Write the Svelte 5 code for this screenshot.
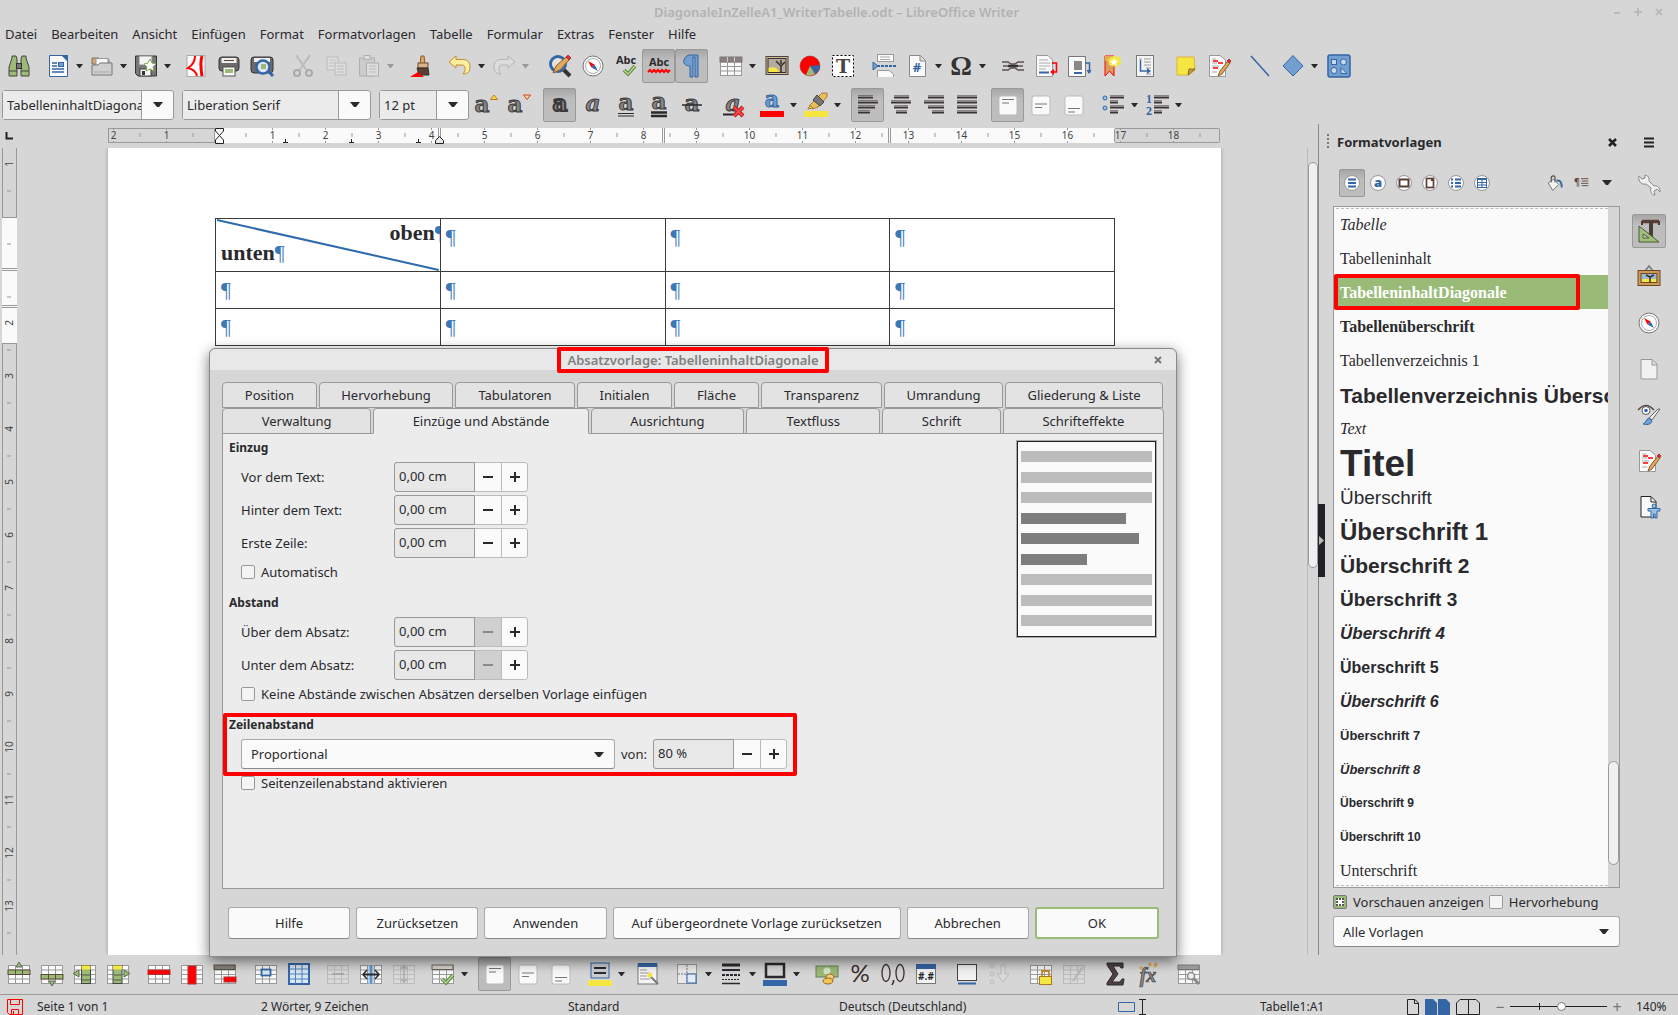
<script>
	const INK = '#2a2a2e';
	const BLUE = '#3465a4';
	const SKY = '#729fcf';
	const GREEN = '#9aba76';
	const YELLOW = '#f5e642';

	const rect = (x, y, w, h, fill, stroke = 'none', extra = '') =>
		`<rect x="${x}" y="${y}" width="${w}" height="${h}" fill="${fill}" stroke="${stroke}" ${extra}/>`;
	const line = (d, color = INK, width = 1, extra = '') =>
		`<path d="${d}" fill="none" stroke="${color}" stroke-width="${width}" ${extra}/>`;
	const shape = (d, fill, stroke = 'none') => `<path d="${d}" fill="${fill}" stroke="${stroke}"/>`;

	const grid = (color = '#999', fill = '#fafafa') =>
		rect(1.5, 3.5, 21, 18, fill, color) +
		line('M1 8H23M1 12.5H23M1 17H23M8.5 3V22M15.5 3V22', color, 1);
	const letter = (char, style = '', y = 18) =>
		`<text x="12" y="${y}" text-anchor="middle" font-family="DejaVu Serif" font-weight="700" font-size="23" fill="#858585" stroke="#3a3a3c" stroke-width="1" ${style}>${char}</text>`;
	const sheet = shape('M4.5 1.5H15.5L20.5 6.5V22.5H4.5Z', '#fafafa', '#8a8a8a') + shape('M15 2V7H20', '#ddd', '#8a8a8a');
	const rows = (list) =>
		list.map(([x1, x2], i) => line(`M${x1} ${4 + i * 5}H${x2}`, '#3a3436', 3) + line(`M${x1} ${3.5 + i * 5}H${x2}`, '#8f8a8d', 1)).join('');
	const cellAlign = (y) =>
		rect(3, 3, 18, 19, '#fafafa', '#bbb', 'rx="2"') + line(`M6 ${y}H18M6 ${y + 3.5}H13`, '#777', 1.2);
	const pencil = shape('M11 22L13 17L21 7L23 9L15 20Z', '#e0a95c', '#8a5a2b') + shape('M20 7L22 5L24 7L22.5 9Z', '#ef2929', '#a33');

	const icons = {
		binoculars:
			shape('M2 22V13L5 4V2H9L10 5V22Z', GREEN, '#47453f') +
			shape('M22 22V13L19 4V2H15L14 5V22Z', GREEN, '#47453f') +
			rect(9.5, 9.5, 5, 5, '#777', '#333') + line('M2 17H10M14 17H22', '#47453f'),
		new: shape('M3.5 1.5H15L21.5 1.5V22.5H3.5Z', '#fafafa', BLUE) + shape('M15 1H22V8Z', BLUE) + line('M6 9H11M6 12H11M6 15H18M6 18H18', BLUE, 1.5) + rect(12.5, 8.5, 5, 4, SKY, BLUE),
		open: shape('M2 4H9L11 6H19V10H2Z', '#d8a874', '#77706b') + rect(6, 4.5, 12, 7, '#f6f6f6', '#999') + shape('M2 11H8L10 9H22V21H2Z', '#cfcfcf', '#777') + line('M4 18H20', '#aaa'),
		save: shape('M1.5 2H22.5V22H4L1.5 19.5Z', '#777', '#333') + rect(5, 2, 13, 9, '#f4f4f4', '#888') + rect(6, 15, 11, 7, '#f4f4f4', '#444') + rect(8, 17, 3, 4, '#333') + shape('M16 5L18 9L22 10L19 13L20 17L16 15L12 17L13 13L10 10L14 9Z', '#fff', '#7ea552'),
		pdf: rect(3, 1.5, 18, 21, '#fafafa', '#aaa') + line('M11 2C11 8 9 11 4 14C9 15 12 18 13 22', '#f00', 2) + line('M18 2C16 8 17 16 18 22', '#f00', 3),
		print: rect(2, 3, 20, 14, '#6d6869', '#333', 'rx="3"') + rect(4.5, 4, 15, 5, '#eee') + line('M7 6.5H17', '#5b3f34') + rect(6, 13, 12, 9, '#f8f8f8', '#555') + rect(8, 15, 8, 4, GREEN),
		preview: rect(1, 3, 22, 16, '#6d6869', '#333', 'rx="3"') + rect(4, 4, 16, 4, '#eee') + line('M18 17L23 22', BLUE, 3) + '<circle cx="13" cy="13" r="6.5" fill="#dbe7f3" stroke="#3465a4" stroke-width="2.4"/>' + rect(11, 10, 5, 5, GREEN),
		cut: line('M5 1L16 17M19 1L8 17', '#bbb', 2) + '<circle cx="6" cy="19" r="3" fill="none" stroke="#aaa" stroke-width="2"/><circle cx="18" cy="19" r="3" fill="none" stroke="#aaa" stroke-width="2"/>',
		copy: rect(3, 3, 11, 13, '#ddd', '#bbb') + line('M5 6H12M5 9H12M5 12H12', '#c2c2c2') + rect(11, 9, 11, 12, '#ddd', '#bbb') + line('M13 12H20M13 15H20M13 18H20', '#bbb'),
		paste: rect(2.5, 4, 15, 18, '#ccc', '#b0b0b0') + rect(7, 1.5, 6, 4, '#ddd', '#b0b0b0') + rect(9.5, 9, 12, 13, '#ddd', '#b0b0b0') + line('M12 12H19M12 15H19M12 18H19', '#bbb'),
		brush: shape('M12 2H15L16 10H11Z', '#e0a95c', '#8a5a2b') + rect(9, 9, 10, 5, '#d9b38c', '#6d4c30') + shape('M8 14H19L20 21H10Z', '#5b3f34', '#333') + shape('M1 23L9 18L15 23Z', '#f00'),
		undo: shape('M1 8L8 2V5.5H15C20 5.5 22 9 22 13C22 18 19 20 15 20C18 17 18 11 14 11H8V14Z', '#fbf0a0', '#c58a2e'),
		redo: shape('M23 8L16 2V5.5H9C4 5.5 2 9 2 13C2 18 5 20 9 20C6 17 6 11 10 11H16V14Z', '#dcdcdc', '#b5b5b5'),
		find: '<circle cx="10" cy="10" r="7.5" fill="#e9e2dc" stroke="#3465a4" stroke-width="3"/>' + line('M16 16L22 22', '#333', 4) + shape('M5 19L8 12L18 3L21 6L12 16Z', '#e0a95c', '#8a5a2b') + shape('M18 3L20 1L23 4L21 6Z', '#ef2929', '#a33'),
		compass: '<circle cx="12" cy="12" r="10" fill="#fafafa" stroke="#777"/><circle cx="12" cy="12" r="7.5" fill="#fff" stroke="#aaa"/>' + shape('M7 7L13.5 10.5L10.5 13.5Z', '#f00') + shape('M17 17L13.5 10.5L10.5 13.5Z', BLUE),
		spell: `<text x="12" y="10" text-anchor="middle" font-family="Open Sans" font-weight="700" font-size="11" fill="${INK}">Abc</text>` + line('M10 16L14 20L21 12', '#5d8a3a', 3.5) + line('M10 16L14 20L21 12', '#b5d694', 1.5),
		autospell: `<text x="12" y="12" text-anchor="middle" font-family="Open Sans" font-weight="700" font-size="11" fill="${INK}">Abc</text>` + line('M1 18L3 16L5 18L7 16L9 18L11 16L13 18L15 16L17 18L19 16L21 18L23 16', '#f00', 2),
		marks: shape('M18 1V23H15V3H13V23H10V12C5 12 3 9 4 6C5 3 7 1 10 1Z', SKY, BLUE),
		table: grid() + rect(1, 3, 22, 5, '#8b7f7f', '#777') + line('M8.5 3V8M15.5 3V8', '#ccc'),
		image: rect(1, 2.5, 22, 18, '#e0b98c', '#444') + rect(3, 4.5, 18, 14, '#b5aaa0', '#333') + shape('M3.5 14C8 12 13 14 14 18H3.5Z', YELLOW) + line('M16 18V11M16 12L11 7M16 12L20 8M16 10V6', '#3b2c28', 1.5),
		chart: '<circle cx="12" cy="12" r="10" fill="#f00" stroke="#822" stroke-width=".5"/>' + shape('M12 12L22 11A10 10 0 0 1 17 20Z', BLUE) + shape('M12 12L17 20A10 10 0 0 1 8 21Z', GREEN),
		textbox: rect(1.5, 1.5, 21, 21, '#fff', '#000', 'stroke-dasharray="2 2"') + `<text x="12" y="19" text-anchor="middle" font-family="DejaVu Serif" font-weight="700" font-size="19" fill="#4a4445">T</text>`,
		pagebreak: rect(5.5, .5, 16, 7, '#fafafa', '#999') + line('M8 3H18M8 5.5H18', '#aaa') + line('M5 12H24', BLUE, 2, 'stroke-dasharray="3 1"') + shape('M1 8L6 12L1 16Z', SKY, BLUE) + shape('M5.5 23V16.5H17L21.5 20V23', '#fafafa', '#999'),
		field: sheet + `<text x="12" y="18" text-anchor="middle" font-family="Open Sans" font-weight="700" font-size="13" fill="${BLUE}">#</text>`,
		omega: `<text x="12" y="21" text-anchor="middle" font-family="Liberation Serif" font-weight="700" font-size="27" fill="#333">Ω</text>`,
		link: line('M1 8H7L10 10H14L17 8H23M1 16H7L10 14H14L17 16H23M2 12H8M16 12H22', '#5b5150', 1.5) + line('M7 12H17', '#333', 2.5),
		footnote: shape('M2.5 1.5H14L18.5 6V22.5H2.5Z', '#fafafa', '#999') + line('M5 6H14M5 9H16M5 12H16M5 15H12', '#aaa') + line('M5 18.5H15', BLUE, 2) + line('M18 9H22.5V18H18', '#f00', 1.5) + shape('M16 18L20 15V21Z', '#f00'),
		endnote: shape('M1.5 2.5H18.5V22.5H1.5Z', '#fafafa', '#777') + rect(7, 7, 8, 9, '#888') + line('M7 19H15', BLUE, 2) + line('M18 9H22.5V19', BLUE, 1.5) + shape('M19.5 16H24.5L22 20Z', BLUE),
		bookmark: shape('M5 2H14V22L9.5 17L5 22Z', '#d8a05c', '#f00') + rect(5, 2, 9, 5, '#e0b050') + shape('M14 2L20 3L21 9L16 13L9 11L8 5Z', YELLOW) + shape('M14 4L15.5 6.5L18 7L16 9L16.5 11.5L14 10L11.5 11.5L12 9L10 7L13 6.5Z', '#fff'),
		crossref: rect(3.5, 1.5, 17, 21, '#f4f4f4', '#777') + line('M6 5H9M11 5H18M11 8H18M11 11H18M13 14H18M13 20H18', '#999') + line('M7.5 6V17H15', BLUE, 1.5) + shape('M14 14V20L18 17Z', BLUE),
		note: shape('M3 3L20 3L21 16L15 21H3Z', YELLOW, '#dcb43c') + shape('M14 21L15 15L21 15Z', '#c89b4d', '#8a6a2b'),
		track: shape('M2.5 1.5H13L18.5 6V22.5H2.5Z', '#fafafa', '#999') + line('M5 5H9M5 9H10M5 12H12M5 18H10', '#aaa') + line('M6 7H11M11 9H16M6 14H11', '#f00', 1.5) + pencil,
		line: line('M3 2L21 22', BLUE, 1.5),
		diamond: shape('M12 1.5L22 12L12 22L2 12Z', SKY, BLUE),
		shapes: rect(1, 1, 22, 22, SKY, BLUE, 'rx="2" stroke-width="1.5"') + rect(4.5, 5.5, 5, 5, '#c5daee', BLUE) + '<circle cx="16.5" cy="8" r="3" fill="#c5daee" stroke="#3465a4"/><circle cx="7" cy="16.5" r="3" fill="#c5daee" stroke="#3465a4"/>' + shape('M14 13.5V19.5H20Z', '#c5daee', BLUE),
		grow: '<g transform="translate(-4 1)">' + letter('a') + '</g>' + shape('M16.5 6.5L20 2L23.5 6.5Z', YELLOW, '#c07820'),
		shrink: '<g transform="translate(-4 1)">' + letter('a') + '</g>' + shape('M16.5 2H23.5L20 6.5Z', '#f6d9a0', '#d04020'),
		bold: letter('a').replace('stroke-width="1"', 'stroke-width="2"').replace('#858585', '#8f8380'),
		italic: letter('a', 'font-style="italic"'),
		underline: letter('a', '', 17) + line('M4 20.5H20M4 23H20', INK, 1),
		underline2: letter('a', '', 16) + line('M4 19.5H20M4 23H20', INK, 2.5),
		strike: letter('a') + line('M2 12H22', INK, 1.5),
		clear: letter('a', 'font-style="italic"') + line('M2 21.5H13', INK, 2) + line('M13 14L22 23M22 14L13 23', '#a22', 4) + line('M13 14L22 23M22 14L13 23', '#f44', 2),
		fontcolor: `<text x="12" y="14" text-anchor="middle" font-family="DejaVu Serif" font-weight="700" font-size="22" fill="${SKY}" stroke="${BLUE}">a</text>` + rect(0, 18, 24, 6, '#f00'),
		highlight: shape('M8 10L18 0H23V4L14 14L8 16L5 13Z', '#e8bf5a', '#a87b3a') + shape('M13 2L20 9L16 13L9 7Z', '#777', '#444') + shape('M4 15L7 13L9 15L4 16Z', YELLOW, '#a87b3a') + rect(0, 18, 24, 6, YELLOW),
		left: rows([[2, 17], [2, 22], [2, 19], [2, 14]]),
		center: rows([[5, 20], [2, 22], [5, 19], [7, 18]]),
		right: rows([[6, 22], [2, 22], [6, 22], [10, 22]]),
		justify: rows([[2, 22], [2, 22], [2, 22], [2, 22]]),
		top: cellAlign(6.5),
		middle: cellAlign(11),
		bottom: cellAlign(15.5),
		bullets: rows([[9, 23], [9, 17], [9, 23], [9, 17]]) + '<circle cx="4" cy="5" r="2" fill="#9cc3e8" stroke="#3465a4"/><circle cx="4" cy="15" r="2" fill="#9cc3e8" stroke="#3465a4"/>',
		numbers: rows([[9, 24], [9, 17], [9, 24], [9, 17]]) + `<text x="1" y="10" font-family="Liberation Serif" font-weight="700" font-size="12" fill="${BLUE}">1</text><text x="1" y="22" font-family="Liberation Serif" font-weight="700" font-size="12" fill="${BLUE}">2</text>`,
		rowAbove: grid() + rect(1, 8, 22, 4.5, GREEN, '#5d4a3e') + shape('M9 5L12 0L15 5Z', GREEN, '#5d6a4e') + line('M8.5 8V12M15.5 8V12', '#5d4a3e'),
		rowBelow: grid() + rect(1, 12.5, 22, 4.5, GREEN, '#5d4a3e') + shape('M9 19L12 24L15 19Z', GREEN, '#5d6a4e') + line('M8.5 13V17M15.5 13V17', '#5d4a3e'),
		colLeft: grid() + rect(8.5, 3.5, 9, 18, GREEN, '#444') + rect(8.5, 3.5, 9, 4, YELLOW) + line('M9 13H17M9 18H17', '#555') + shape('M6 8V15L0 11.5Z', GREEN, '#5d6a4e'),
		colRight: grid() + rect(7, 3.5, 9, 18, GREEN, '#444') + rect(7, 3.5, 9, 4, YELLOW) + line('M8 13H15M8 18H15', '#555') + shape('M18 8V15L24 11.5Z', GREEN, '#5d6a4e'),
		delRow: grid() + rect(1, 8, 22, 4.5, '#f00', '#a33'),
		delCol: grid() + rect(8, 4, 8, 18, '#f00', '#a33'),
		delTable: grid() + rect(1, 3, 21, 4.5, '#8b7f7f', '#554') + rect(11, 15, 12, 5, '#f00', '#a33'),
		selCell: grid() + rect(7.5, 7.5, 9, 6, '#dbe7f3', BLUE, 'stroke-width="1.8"'),
		selTable: rect(2, 2, 20, 20, '#dbe7f3', BLUE, 'stroke-width="2"') + line('M2 7H22M2 12H22M2 17H22M8.5 2V22M15 2V22', '#4a80bd'),
		merge: grid('#bbb', '#d9d9d9') + line('M6 12H18', '#aaa', 2),
		split: grid() + rect(9.5, 3, 5, 19, '#9cc3e8') + line('M12 3V22', BLUE) + line('M4 12.5H20', INK, 2) + line('M8 8L4 12.5L8 17M16 8L20 12.5L16 17', INK, 1.5),
		splitTable: grid('#bbb', '#d9d9d9') + line('M12 4V20M9 7L12 4L15 7M9 17L12 20L15 17', '#aaa', 1.5),
		autoFit: grid() + rect(1, 3, 21, 4.5, '#d9d0cc', '#665') + line('M11 17L15 21L22 13', '#5d8a3a', 3.5) + line('M11 17L15 21L22 13', '#b5d694', 1.5),
		fill: rect(3, 1, 18, 15, '#c9cdd2', BLUE) + line('M6 6H18M6 11H18', INK, 1.8) + rect(0, 18, 24, 6, YELLOW),
		autoFormat: rect(2, 2, 19, 20, '#f4f4f4', '#777') + rect(2, 1, 19, 4, BLUE) + line('M4 8H11M4 11H13M4 14H11M4 17H14', '#999') + line('M14 14L22 22', '#777', 2) + '<circle cx="14" cy="13" r="2.5" fill="#f5e642"/>',
		borders: rect(2.5, 2.5, 19, 19, '#eaeaea', '#999') + line('M12 3V21M3 12H21', '#777', 1, 'stroke-dasharray="2 1"') + rect(12, 12, 9, 9, '#e3ecf5', BLUE),
		lineStyle: line('M3 3H21', INK, 3) + line('M3 8H21', INK, 2) + line('M3 13H21', INK, 2, 'stroke-dasharray="3 1"') + line('M3 17.5H21', INK, 1, 'stroke-dasharray="2 1"') + line('M3 21.5H21', INK, 1.5),
		lineColor: rect(3, 2, 18, 13, '#d6d6d6', INK, 'stroke-width="2.5"') + rect(0, 18, 24, 6, BLUE),
		currency: rect(1, 4, 22, 11, GREEN, '#6b7f58') + '<circle cx="12" cy="9" r="3.5" fill="#d8e3cc"/><ellipse cx="15" cy="15" rx="4" ry="3" fill="#f3d27a" stroke="#9a6a2b"/><ellipse cx="13" cy="19" rx="5" ry="3" fill="#f3c64e" stroke="#9a6a2b"/>',
		percent: `<text x="12" y="20" text-anchor="middle" font-family="Lato" font-size="24" fill="#3b2f2d">%</text>`,
		decimal: '<ellipse cx="5" cy="11" rx="4" ry="8.5" fill="none" stroke="#3b2f2d" stroke-width="1.3"/><ellipse cx="19" cy="11" rx="4" ry="8.5" fill="none" stroke="#3b2f2d" stroke-width="1.3"/>' + line('M12.5 18V20L11 23', '#3b2f2d', 1.6),
		numFormat: rect(2.5, 2.5, 19, 19, '#f4f4f4', '#777') + rect(2, 2, 20, 5, BLUE) + `<text x="12" y="18" text-anchor="middle" font-family="Open Sans" font-weight="700" font-size="10" fill="${INK}">#.#</text>`,
		caption: rect(2.5, 2.5, 19, 16, '#f2f2f2', '#444') + line('M3 21.5H21', BLUE, 2),
		sort: '<circle cx="4" cy="4" r="2" fill="none" stroke="#bbb"/><circle cx="4" cy="12" r="2" fill="none" stroke="#bbb"/><circle cx="4" cy="20" r="2" fill="none" stroke="#bbb"/>' + shape('M13 3H17V12H21L15 20L9 12H13Z', '#dadada', '#bbb'),
		protect: grid() + rect(10.5, 14.5, 12, 8, YELLOW, '#a87b22') + line('M13 14V9H20V14', '#c58a2e', 1.8),
		unprotect: grid('#bbb', '#d9d9d9') + line('M21 5L11 19', '#bbb', 3),
		sum: shape('M4 1H20V6H18L17 4H10L15 12L9 20H17L19 17H21L20 23H4V21L10 12L4 3Z', '#4f4142', '#2a2a2e'),
		fx: `<text x="12" y="20" text-anchor="middle" font-family="Liberation Serif" font-style="italic" font-weight="700" font-size="20" fill="#888" stroke="#444" stroke-width=".7">fx</text>` + shape('M12 2L14 0L16 3L14 5ZM17 3L20 0L22 3L19 6ZM3 6L5 4L7 6L5 8Z', '#e0a95c'),
		tableProps: grid() + rect(1, 3, 21, 4.5, '#999', '#777') + line('M15 15L22 22', '#888', 3) + '<circle cx="14" cy="14" r="3.5" fill="#eee" stroke="#888" stroke-width="1.5"/>',
		wrench: shape('M2 3L5 6L8 5L8 2C13 3 12 7 12 8L17 13C21 12 23 15 23 19L20 16L17 18L18 22C14 22 13 18 14 15L9 11C4 12 1 8 2 3Z', '#efefef', '#888'),
		styles: line('M5 2.5H22', '#5b3f34', 3.5) + line('M14 2V21', '#4a3c38', 4) + line('M5 2V6M22 2V6', '#4a3c38', 2) + shape('M2 7V23H22Z', '#9fc07a', '#4a5a38') + shape('M6 15V19H12Z', '#d6d6d6', '#4a5a38'),
		gallery: line('M8 6L12 1L16 6', '#777', 1.5) + rect(1, 5.5, 22, 15, '#d09a55', '#6b4a2c') + rect(4, 8.5, 16, 9, '#9cb9cf', '#6b4a2c') + rect(5, 14, 14, 3, YELLOW) + line('M13 17V12L9 10M13 12L17 10', '#3b2c28', 1.5),
		page: shape('M4 2.5H15L20 7V22H4Z', '#f2f2f2', '#999') + shape('M15 3V8H20', '#ddd', '#999'),
		eye: line('M1 7Q9 -2 17 7', '#5b4a44', 1.5) + '<circle cx="9" cy="7.5" r="4" fill="#fff" stroke="#555"/><circle cx="9" cy="7.5" r="1.8" fill="#3465a4"/>' + shape('M23 6L15 17L12 15L21 6Z', '#eee', '#666') + shape('M12 15L15 18C14 22 9 22 6 21C9 20 9 16 12 15Z', SKY, BLUE),
		access: shape('M4 1.5H14L19 6.5V22H4Z', '#fafafa', '#222') + line('M14 2V7H19', '#222') + '<circle cx="17" cy="11" r="2" fill="#9cc3e8" stroke="#3465a4"/>' + shape('M11 13.5H23V16H20V23H18V19H16.5V23H14V16H11Z', '#9cc3e8', BLUE),
		bucket: shape('M3 12L10 7L17 14L9 22Z', '#f2f2f2', '#555') + line('M7 11V4Q10 1 12 4V11', '#5b4a44', 1.5) + line('M14 9Q21 7 21 18', BLUE, 2.5),
		parLines: '<text x="1" y="17" font-family="DejaVu Sans" font-size="15" fill="#5b3f34">¶</text>' + line('M12 5.5H23M13 9H23M12 12.5H23M13 16H23', '#5b3f34', 1.3)
	};

	const badges = [
		{ label: 'Absatzvorlagen', on: true, art: line('M8 8.5H16M8 12H16M8 15.5H16', BLUE, 2) },
		{ label: 'Zeichenvorlagen', art: `<text x="12" y="16" text-anchor="middle" font-family="Open Sans" font-weight="800" font-size="13" fill="${BLUE}">a</text>` },
		{ label: 'Rahmenvorlagen', art: rect(7.5, 8.5, 9, 7, '#fff', '#5b3f34', 'stroke-width="2"') },
		{ label: 'Seitenvorlagen', art: rect(8.5, 7.5, 7, 9, '#fff', '#5b3f34', 'stroke-width="1.7"') + rect(13, 7, 3, 3, '#5b3f34') },
		{ label: 'Listenvorlagen', art: line('M7 8.5H9M7 12H9M7 15.5H9M11 8.5H17M11 12H17M11 15.5H17', BLUE, 2) },
		{ label: 'Tabellenvorlagen', art: rect(7.5, 7.5, 9, 9, '#fff', BLUE) + line('M7 8.5H17M7 11.5H17M7 14H17M12 8V17', BLUE) }
	];

	const t = (icon, label, opts = {}) => ({ icon, label, ...opts });
	const menu = { menu: true };
	const on = { on: true };

	// Numbers are the spaces between tool groups.
	const standardBar = [
		t('binoculars', 'Suchen'), 6, t('new', 'Neu', menu), t('open', 'Öffnen', menu), t('save', 'Speichern', menu), 6,
		t('pdf', 'Als PDF exportieren'), t('print', 'Drucken'), t('preview', 'Druckvorschau'), 8,
		t('cut', 'Ausschneiden'), t('copy', 'Kopieren'), t('paste', 'Einfügen', { menu: true, dim: true }), 8,
		t('brush', 'Format übertragen'), 6, t('undo', 'Rückgängig', menu), t('redo', 'Wiederherstellen', { menu: true, dim: true }), 12,
		t('find', 'Suchen und Ersetzen'), t('compass', 'Navigator'), t('spell', 'Rechtschreibung'),
		t('autospell', 'Automatische Rechtschreibprüfung', on), t('marks', 'Formatierungszeichen', on), 6,
		t('table', 'Tabelle', menu), 2, t('image', 'Bild'), t('chart', 'Diagramm'), t('textbox', 'Textfeld'), 8,
		t('pagebreak', 'Seitenumbruch'), t('field', 'Feldbefehl', menu), t('omega', 'Sonderzeichen', menu), 8,
		t('link', 'Hyperlink'), t('footnote', 'Fußnote'), t('endnote', 'Endnote'), t('bookmark', 'Lesezeichen'), t('crossref', 'Querverweis'), 8,
		t('note', 'Kommentar'), t('track', 'Änderungen'), 8, t('line', 'Linie'), t('diamond', 'Formen', menu), 2, t('shapes', 'Zeichnen')
	];
	const formatBar = [
		t('grow', 'Schrift vergrößern'), t('shrink', 'Schrift verkleinern'), 8,
		t('bold', 'Fett', on), t('italic', 'Kursiv'), t('underline', 'Unterstrichen'), t('underline2', 'Doppelt unterstrichen'), t('strike', 'Durchgestrichen'), 8,
		t('clear', 'Formatierung löschen'), 6, t('fontcolor', 'Schriftfarbe', menu), t('highlight', 'Hervorhebungsfarbe', menu), 8,
		t('left', 'Linksbündig', on), t('center', 'Zentriert'), t('right', 'Rechtsbündig'), t('justify', 'Blocksatz'), 8,
		t('top', 'Oben', on), t('middle', 'Mitte'), t('bottom', 'Unten'), 6, t('bullets', 'Aufzählung', menu), t('numbers', 'Nummerierung', menu)
	];
	const tableBar = [
		t('rowAbove', 'Zeile davor'), t('rowBelow', 'Zeile danach'), t('colLeft', 'Spalte davor'), t('colRight', 'Spalte danach'), 8,
		t('delRow', 'Zeile löschen'), t('delCol', 'Spalte löschen'), t('delTable', 'Tabelle löschen'), 8,
		t('selCell', 'Zelle auswählen'), t('selTable', 'Tabelle auswählen'), 6,
		t('merge', 'Zellen verbinden'), t('split', 'Zellen teilen'), t('splitTable', 'Tabelle teilen'), 6, t('autoFit', 'Größe optimieren', menu), 8,
		t('top', 'Oben', on), t('middle', 'Mitte'), t('bottom', 'Unten'), 6, t('fill', 'Hintergrund', menu), 4, t('autoFormat', 'AutoFormat'), 6,
		t('borders', 'Umrandung', menu), t('lineStyle', 'Rahmenart', menu), t('lineColor', 'Rahmenfarbe', menu), 8,
		t('currency', 'Währung'), t('percent', 'Prozent'), t('decimal', 'Dezimal'), t('numFormat', 'Zahlenformat'), 8,
		t('caption', 'Beschriftung'), t('sort', 'Sortieren'), 8, t('protect', 'Zellen schützen'), t('unprotect', 'Schutz aufheben'), 8,
		t('sum', 'Summe'), t('fx', 'Formel'), 8, t('tableProps', 'Tabelleneigenschaften')
	];

	const menus = ['Datei', 'Bearbeiten', 'Ansicht', 'Einfügen', 'Format', 'Formatvorlagen', 'Tabelle', 'Formular', 'Extras', 'Fenster', 'Hilfe'];
	const combos = [
		{ label: 'Absatzvorlage', value: 'TabelleninhaltDiagonale', size: 'wide' },
		{ label: 'Schriftart', value: 'Liberation Serif', size: 'font' },
		{ label: 'Schriftgrad', value: '12 pt', size: 'small' }
	];
	const tabsTop = ['Position', 'Hervorhebung', 'Tabulatoren', 'Initialen', 'Fläche', 'Transparenz', 'Umrandung', 'Gliederung & Liste'];
	const tabsBottom = ['Verwaltung', 'Einzüge und Abstände', 'Ausrichtung', 'Textfluss', 'Schrift', 'Schrifteffekte'];
	const indents = ['Vor dem Text:', 'Hinter dem Text:', 'Erste Zeile:'];
	const spacings = ['Über dem Absatz:', 'Unter dem Absatz:'];
	const previewBars = [100, 100, 100, 80, 90, 50, 100, 100, 100];
	const deck = [
		['wrench', 'Eigenschaften'], ['styles', 'Formatvorlagen'], ['gallery', 'Galerie'], ['compass', 'Navigator'],
		['page', 'Seite'], ['eye', 'Stil-Inspektor'], ['track', 'Änderungen verwalten'], ['access', 'Barrierefreiheit']
	];
	const styles = [
		['Tabelle', 'serif italic'], ['Tabelleninhalt', 'serif'], ['TabelleninhaltDiagonale', 'serif bold selected'],
		['Tabellenüberschrift', 'serif bold'], ['Tabellenverzeichnis 1', 'serif'], ['Tabellenverzeichnis Überschrift', 'bold s21'],
		['Text', 'serif italic'], ['Titel', 'bold s37'], ['Überschrift', 's19'], ['Überschrift 1', 'bold s24'],
		['Überschrift 2', 'bold s21'], ['Überschrift 3', 'bold s19'], ['Überschrift 4', 'bold italic s17'], ['Überschrift 5', 'bold s16'],
		['Überschrift 6', 'bold italic s16'], ['Überschrift 7', 'bold s13'], ['Überschrift 8', 'bold italic s13'],
		['Überschrift 9', 'bold s12'], ['Überschrift 10', 'bold s12'], ['Unterschrift', 'serif']
	];

	// Both rulers run in centimetres at 140 % zoom.
	const CM = 53;
	const hTicks = Array.from({ length: 42 }, (_, i) => i / 2 - 2).filter((n) => n !== 0 && n < 19);
	const vTicks = Array.from({ length: 30 }, (_, i) => i / 2 - 1).filter((n) => n !== 0 && n !== 1);

	let activeTab = $state('Einzüge und Abstände');
	let zoom = $state(53);
</script>

{#snippet icon(name, size = 24)}
	<svg width={size} height={size} viewBox="0 0 24 24" aria-hidden="true">{@html icons[name]}</svg>
{/snippet}

{#snippet caret()}
	<svg class="caret" width="10" height="6" viewBox="0 0 10 6" aria-hidden="true"><path d="M0 0H10L6 5H4Z" fill="currentColor" /></svg>
{/snippet}

{#snippet tools(items)}
	{#each items as item}
		{#if typeof item === 'number'}
			<span style="width: {item}px"></span>
		{:else}
			<button class="tool" class:on={item.on} aria-label={item.label}>{@render icon(item.icon)}</button>
			{#if item.menu}
				<button class="tool-menu" class:dim={item.dim} aria-label="{item.label}: Auswahl">
					<svg width="7" height="4" viewBox="0 0 7 4"><path d="M0 0H7L4 4H3Z" fill="currentColor" /></svg>
				</button>
			{/if}
		{/if}
	{/each}
{/snippet}

{#snippet spin(id, value, floor = false)}
	<span class="spin">
		<input {id} {value} />
		<button aria-label="Weniger" disabled={floor}><svg width="10" height="10"><path d="M0 5H10" stroke="currentColor" stroke-width="2" /></svg></button>
		<button aria-label="Mehr"><svg width="10" height="10"><path d="M0 5H10M5 0V10" stroke="currentColor" stroke-width="2" /></svg></button>
	</span>
{/snippet}

<div class="app">
	<header class="titlebar">
		<h1>DiagonaleInZelleA1_WriterTabelle.odt – LibreOffice Writer</h1>
		<div class="window-buttons">
			<button aria-label="Minimieren"><svg width="8" height="8"><path d="M1 5H7" stroke="#bbb" stroke-width="2" /></svg></button>
			<button aria-label="Maximieren"><svg width="8" height="8"><path d="M0 4H8M4 0V8" stroke="#bbb" stroke-width="2" /></svg></button>
			<button aria-label="Schließen"><svg width="8" height="8"><path d="M1 1L7 7M7 1L1 7" stroke="#bbb" stroke-width="2" /></svg></button>
		</div>
	</header>

	<nav class="menubar">
		{#each menus as entry}
			<button>{entry}</button>
		{/each}
	</nav>

	<div class="toolbar standard">{@render tools(standardBar)}</div>
	<div class="toolbar format">
		{#each combos as combo}
			<span class="combo {combo.size}">
				<input aria-label={combo.label} value={combo.value} />
				<button aria-label="{combo.label} wählen">{@render caret()}</button>
			</span>
		{/each}
		{@render tools(formatBar)}
	</div>

	<div class="main">
		<section class="editor">
			<div class="ruler-row">
				<svg class="corner" width="8" height="8"><path d="M1.5 0V6.5H8" fill="none" stroke="#222" stroke-width="2" /></svg>
				<svg class="ruler" width="1112" height="16" viewBox="0 0 1112 16">
					<rect x="106" y="0" width="901" height="15" fill="#fafafa" />
					<rect x=".5" y=".5" width="106" height="14" fill="#d6d6d6" stroke="#999" />
					<rect x="1006.5" y=".5" width="105" height="14" rx="1" fill="#d6d6d6" stroke="#999" />
					{#each hTicks as n}
						{#if Number.isInteger(n)}
							<path d="M{111.5 + n * CM} 0V2M{111.5 + n * CM} 13V15" stroke="#999" />
							<text x={111.5 + n * CM} y="11" text-anchor="middle">{Math.abs(n)}</text>
						{:else}
							<path d="M{111.5 + n * CM} 5V9" stroke="#999" />
						{/if}
					{/each}
					<path d="M330.5 0V15M332.5 0V15M554.5 0V15M556.5 0V15M780.5 0V15M782.5 0V15" stroke="#999" />
					<path d="M177.5 11V14M175 14.5H180M243.5 11V14M241 14.5H246M310.5 11V14M308 14.5H313" stroke="#222" />
					<path d="M107.5 .5H115.5V3L111.5 7.5L107.5 3ZM111.5 7.5L115.5 12V15.5H107.5V12Z" fill="#fafafa" stroke="#222" />
					<path d="M331.5 8.5L335.5 12.5V15.5H327.5V12.5Z" fill="#e6e6e6" stroke="#222" />
				</svg>
			</div>
			<div class="canvas">
				<svg class="vruler" width="16" height="807" viewBox="0 0 16 807">
					<rect x=".5" y="-1" width="14" height="809" fill="#d6d6d6" stroke="#999" />
					<rect x="0" y="69" width="15" height="126" fill="#fafafa" />
					<path d="M0 69.5H15M0 195.5H15M0 120.5H15M0 122.5H15M0 157.5H15M0 159.5H15" stroke="#999" />
					{#each vTicks as n}
						{#if Number.isInteger(n)}
							<text x={-69 - n * CM} y="11" text-anchor="middle" transform="rotate(-90)">{Math.abs(n)}</text>
						{:else}
							<path d="M5 {69.5 + n * CM}H9" stroke="#999" />
						{/if}
					{/each}
				</svg>
				<div class="desk">
					<article class="page">
						<table>
							<tbody>
								<tr>
									<td class="diagonal">
										<svg viewBox="0 0 224 51" preserveAspectRatio="none" aria-hidden="true">
											<path d="M1 1L223 50" stroke="#2f6aac" stroke-width="2" />
										</svg>
										<p class="upper">oben<span class="mark clipped">¶</span></p>
										<p>unten<span class="mark">¶</span></p>
									</td>
									{#each [1, 2, 3] as _}
										<td><span class="mark">¶</span></td>
									{/each}
								</tr>
								{#each [1, 2] as _}
									<tr>
										{#each [1, 2, 3, 4] as _}
											<td><span class="mark">¶</span></td>
										{/each}
									</tr>
								{/each}
							</tbody>
						</table>
					</article>
				</div>
				<div class="scroll"><div class="thumb"></div></div>
			</div>
		</section>

		<aside class="sidebar">
			<button class="collapse" aria-label="Seitenleiste ausblenden">
				<svg width="5" height="9"><path d="M0 0L5 4.5L0 9Z" fill="#bbb" /></svg>
			</button>
			<div class="panel">
				<div class="panel-head">
					<svg width="3" height="16"><path d="M1 0V16" stroke="#777" stroke-width="2" stroke-dasharray="2 2" /></svg>
					<h2>Formatvorlagen</h2>
					<button aria-label="Panel schließen"><svg width="9" height="9"><path d="M1 1L8 8M8 1L1 8" stroke="#222" stroke-width="2.5" /></svg></button>
				</div>
				<div class="panel-tools">
					{#each badges as badge}
						<button class="badge" class:on={badge.on} aria-label={badge.label}>
							<svg width="24" height="24" viewBox="0 0 24 24"><circle cx="12" cy="12" r="7.5" fill="#fafafa" stroke="#999" />{@html badge.art}</svg>
						</button>
					{/each}
					<span class="spacer"></span>
					<button class="badge" aria-label="Gießkannenmodus">{@render icon('bucket', 18)}</button>
					<button class="badge" aria-label="Vorlagenaktionen">{@render icon('parLines', 16)}</button>
					<button class="badge" aria-label="Weitere Aktionen">{@render caret()}</button>
				</div>
				<div class="style-box">
					<ul>
						{#each styles as [name, look]}
							<li class={look}>
								{name}
								{#if look.includes('selected')}<span class="frame"></span>{/if}
							</li>
						{/each}
					</ul>
					<div class="list-scroll"><div class="list-thumb"></div></div>
				</div>
				<div class="checks">
					<label><input type="checkbox" checked />Vorschauen anzeigen</label>
					<label><input type="checkbox" />Hervorhebung</label>
				</div>
				<div class="select">
					<select aria-label="Vorlagenfilter"><option>Alle Vorlagen</option></select>
					{@render caret()}
				</div>
			</div>
			<div class="deck">
				<button class="deck-menu" aria-label="Seitenleisteneinstellungen">
					<svg width="10" height="11"><path d="M0 1.5H10M0 5.5H10M0 9.5H10" stroke="#222" stroke-width="2" /></svg>
				</button>
				{#each deck as [name, label]}
					<button class="deck-button" class:on={name === 'styles'} aria-label={label}>{@render icon(name)}</button>
				{/each}
			</div>
		</aside>
	</div>

	<div class="toolbar table-tools">{@render tools(tableBar)}</div>

	<footer class="status">
		<svg width="16" height="16"><path d="M.5 .5H15.5V15.5H2.5L.5 13.5ZM3.5 .5V5.5H12.5V.5M4.5 15V10.5H11.5V15M6.5 12V15" fill="none" stroke="#f00" /></svg>
		<span>Seite 1 von 1</span>
		<span>2 Wörter, 9 Zeichen</span>
		<span>Standard</span>
		<span>Deutsch (Deutschland)</span>
		<svg width="30" height="16"><path d="M.5 3.5H16.5V12.5H.5Z" fill="none" stroke="#3465a4" /><path d="M21 .5H28M24.5 .5V15.5M21 15.5H28" stroke="#222" fill="none" /></svg>
		<span>Tabelle1:A1</span>
		<div class="view">
			<svg width="74" height="16">
				<path d="M.5 .5H8L11.5 4V15.5H.5ZM7.5 1V4.5H11" fill="none" stroke="#222" />
				<path d="M18 0H26L30 4V16H18ZM31 0H39L43 4V16H31Z" fill="#3465a4" />
				<path d="M49.5 4L53 .5H61.5V15.5H49.5ZM61.5 .5H69L72.5 4V15.5H61.5Z" fill="none" stroke="#222" />
			</svg>
			<button aria-label="Verkleinern">−</button>
			<input type="range" aria-label="Maßstab" bind:value={zoom} />
			<button aria-label="Vergrößern">+</button>
			<span>140%</span>
		</div>
	</footer>

	<div class="dialog" role="dialog" aria-labelledby="dialog-title">
		<header>
			<h2 id="dialog-title">Absatzvorlage: TabelleninhaltDiagonale<span class="frame"></span></h2>
			<button aria-label="Dialog schließen"><svg width="8" height="8"><path d="M1 1L7 7M7 1L1 7" stroke="#777" stroke-width="2" /></svg></button>
		</header>
		<div class="dialog-body">
			<div class="tabs tabs-top" role="tablist">
				{#each tabsTop as tab}
					<button role="tab" aria-selected={activeTab === tab} onclick={() => (activeTab = tab)}>{tab}</button>
				{/each}
			</div>
			<div class="tabs tabs-bottom" role="tablist">
				{#each tabsBottom as tab}
					<button role="tab" aria-selected={activeTab === tab} onclick={() => (activeTab = tab)}>{tab}</button>
				{/each}
			</div>
			<div class="tab-page">
				<form onsubmit={(e) => e.preventDefault()}>
					<section>
						<h3>Einzug</h3>
						{#each indents as label, i}
							<div class="field"><label for="indent-{i}">{label}</label>{@render spin(`indent-${i}`, '0,00 cm')}</div>
						{/each}
						<label class="check"><input type="checkbox" />Automatisch</label>
					</section>
					<section>
						<h3>Abstand</h3>
						{#each spacings as label, i}
							<div class="field"><label for="spacing-{i}">{label}</label>{@render spin(`spacing-${i}`, '0,00 cm', true)}</div>
						{/each}
						<label class="check"><input type="checkbox" />Keine Abstände zwischen Absätzen derselben Vorlage einfügen</label>
					</section>
					<section class="line-spacing">
						<h3>Zeilenabstand</h3>
						<div class="field">
							<div class="select mode">
								<select aria-label="Zeilenabstand"><option>Proportional</option></select>
								{@render caret()}
							</div>
							<label class="of" for="percent">von:</label>{@render spin('percent', '80 %')}
						</div>
						<label class="check"><input type="checkbox" />Seitenzeilenabstand aktivieren</label>
						<span class="frame"></span>
					</section>
				</form>
				<div class="sample">
					{#each previewBars as width}
						<div class="bar" class:dark={width < 100} style="width: {width}%"></div>
					{/each}
				</div>
			</div>
			<div class="actions">
				<button>Hilfe</button>
				<button>Zurücksetzen</button>
				<button>Anwenden</button>
				<button class="long">Auf übergeordnete Vorlage zurücksetzen</button>
				<button>Abbrechen</button>
				<button class="default">OK</button>
			</div>
		</div>
	</div>
</div>

<style>
	:global(body) {
		margin: 0;
		background: #d6d6d6;
	}

	.app {
		position: relative;
		display: flex;
		flex-direction: column;
		height: 100vh;
		overflow: hidden;
		background: #d6d6d6;
		color: #2a2a2e;
		font-family: 'Noto Sans', sans-serif;
		font-size: 13px;
	}

	h1,
	h2,
	h3,
	p,
	ul {
		margin: 0;
		padding: 0;
		font-size: inherit;
	}

	button,
	input,
	select {
		box-sizing: border-box;
		margin: 0;
		padding: 0;
		border: 0;
		border-radius: 0;
		background: none;
		color: inherit;
		font: inherit;
	}

	button {
		display: flex;
		align-items: center;
		justify-content: center;
	}

	svg {
		display: block;
		flex: none;
	}

	button svg {
		overflow: visible;
	}

	/* window chrome */
	.titlebar {
		display: flex;
		align-items: center;
		height: 24px;
		padding: 0 15px 0 60px;
		color: #b2b2b2;
	}

	.titlebar h1 {
		flex: 1;
		text-align: center;
		font-weight: 600;
	}

	.window-buttons {
		display: flex;
		gap: 13px;
	}

	.menubar {
		display: flex;
		align-items: center;
		gap: 14px;
		height: 20px;
		padding: 0 0 2px 5px;
	}

	.toolbar {
		display: flex;
		align-items: center;
		height: 38px;
		padding-left: 2px;
	}

	.toolbar.standard {
		height: 40px;
	}

	.tool {
		flex: none;
		width: 33px;
		height: 34px;
	}

	.tool-menu {
		width: 11px;
		height: 34px;
	}

	.dim {
		color: #999;
	}

	.on {
		border: 1px solid #999;
		border-radius: 2px;
		background: linear-gradient(#a6a6a6, #bdbdbd 10px);
	}

	/* combo boxes */
	.combo {
		display: flex;
		height: 30px;
		margin-right: 8px;
		border: 1px solid #999;
		border-radius: 3px;
		background: #fafafa;
	}

	.combo input {
		flex: 1;
		min-width: 0;
		padding-left: 4px;
		border-right: 1px solid #999;
		background: #ebebeb;
	}

	.combo button {
		width: 31px;
	}

	.combo,
	.spin,
	.select {
		box-sizing: border-box;
	}

	.combo.wide {
		width: 172px;
	}

	.combo.font {
		width: 189px;
	}

	.combo.small {
		width: 90px;
		margin-right: 0;
	}

	/* editor */
	.main {
		display: flex;
		flex: 1;
		min-height: 0;
	}

	.editor {
		display: flex;
		flex: 1;
		flex-direction: column;
		min-width: 0;
	}

	.ruler-row {
		display: flex;
		align-items: center;
		height: 24px;
		padding-right: 8px;
	}

	.corner {
		margin: 0 5px;
	}

	.ruler {
		margin: 0 auto;
	}

	.ruler text,
	.vruler text {
		fill: #444;
		font-size: 10px;
	}

	.canvas {
		display: flex;
		flex: 1;
		min-height: 0;
	}

	.vruler {
		margin-left: 2px;
	}

	.desk {
		display: flex;
		flex: 1;
		justify-content: center;
		padding-left: 4px;
	}

	.page {
		box-sizing: border-box;
		width: 1113px;
		padding: 70px 106px 0 107px;
		background: #fff;
		box-shadow: 0 0 4px #999;
		clip-path: inset(0 -4px);
	}

	.page table {
		width: 100%;
		table-layout: fixed;
		border-collapse: collapse;
	}

	.page td {
		position: relative;
		box-sizing: border-box;
		height: 37px;
		padding: 6px 0 0 5px;
		border: 1px solid #3a3a3a;
		vertical-align: top;
		font: 22px/24px 'Liberation Serif', serif;
	}

	.page .diagonal {
		height: 52px;
		padding: 4px 0 8px 5px;
		font-weight: 700;
		line-height: 20px;
	}

	.diagonal svg {
		position: absolute;
		inset: 0;
		width: 100%;
		height: 100%;
	}

	.diagonal p {
		display: flex;
	}

	.diagonal .upper {
		justify-content: flex-end;
	}

	.mark {
		color: #3b78b8;
		font-weight: 400;
	}

	.clipped {
		overflow: hidden;
		width: 5px;
	}

	.scroll {
		box-sizing: border-box;
		width: 11px;
		padding-top: 14px;
		border-left: 1px solid #bbb;
	}

	.thumb {
		height: 406px;
		border: 1px solid #999;
		border-radius: 5px;
		box-sizing: border-box;
		background: #f0f0f0;
	}

	/* sidebar */
	.sidebar {
		position: relative;
		display: flex;
		box-sizing: border-box;
		width: 360px;
		border-left: 1px solid #888;
	}

	.collapse {
		position: absolute;
		top: 380px;
		left: -1px;
		width: 7px;
		height: 73px;
		background: #222226;
	}

	.panel {
		display: flex;
		flex: 1;
		flex-direction: column;
		min-width: 0;
		padding: 0 0 8px 14px;
	}

	.panel-head {
		display: flex;
		align-items: center;
		height: 36px;
		margin-left: -6px;
		padding-right: 3px;
	}

	.panel-head h2 {
		flex: 1;
		margin-left: 7px;
	}

	.panel-tools {
		display: flex;
		align-items: center;
		height: 46px;
		padding-left: 6px;
	}

	.badge {
		width: 26px;
		height: 28px;
	}

	.spacer {
		flex: 1;
	}

	.style-box {
		display: flex;
		flex: 1;
		min-height: 0;
		border: 1px solid #999;
		background: #fafafa;
	}

	.style-box ul {
		position: relative;
		flex: 1;
		overflow: hidden;
		list-style: none;
	}

	.style-box ul::before,
	.style-box ul::after {
		content: '';
		position: absolute;
		right: 0;
		left: 2px;
		border-top: 1px dashed #bbb;
	}

	.style-box ul::before {
		top: 1px;
	}

	.style-box ul::after {
		bottom: 1px;
	}

	.style-box li {
		position: relative;
		height: 34px;
		padding-left: 6px;
		font: 16px/37px 'Liberation Sans', sans-serif;
		white-space: nowrap;
	}

	.style-box li.serif {
		font-family: 'Liberation Serif', serif;
		line-height: 35px;
	}

	.style-box li.bold {
		font-weight: 700;
	}

	.style-box li.italic {
		font-style: italic;
	}

	.style-box li.selected {
		background: #99bb77;
		color: #fff;
	}

	.style-box li.s12 {
		font-size: 12px;
	}

	.style-box li.s13 {
		font-size: 13px;
	}

	.style-box li.s17 {
		font-size: 17px;
	}

	.style-box li.s19 {
		font-size: 19px;
	}

	.style-box li.s21 {
		font-size: 21px;
	}

	.style-box li.s24 {
		font-size: 24px;
	}

	.style-box li.s37 {
		font-size: 37px;
	}

	.frame {
		position: absolute;
		box-sizing: border-box;
		border: 4px solid #f00;
		border-radius: 2px;
		pointer-events: none;
	}

	li .frame {
		inset: -1px auto -1px 0;
		width: 246px;
	}

	.list-scroll {
		width: 11px;
		padding-top: 554px;
		background: #d6d6d6;
	}

	.list-thumb {
		box-sizing: border-box;
		height: 104px;
		border: 1px solid #999;
		border-radius: 6px;
		background: #f0f0f0;
	}

	.checks {
		display: flex;
		align-items: center;
		gap: 5px;
		height: 28px;
		white-space: nowrap;
	}

	.checks label,
	.check {
		display: flex;
		align-items: center;
		gap: 6px;
	}

	input[type='checkbox'] {
		appearance: none;
		display: grid;
		place-items: center;
		width: 14px;
		height: 14px;
		border: 1px solid #999;
		border-radius: 2px;
		background: #f4f4f4;
	}

	input[type='checkbox']:checked {
		border-color: #777;
		background: #99bb77;
	}

	input[type='checkbox']:checked::before {
		content: '';
		box-sizing: border-box;
		width: 8px;
		height: 8px;
		border: 2px dotted #555;
		background: #fff;
	}

	.select {
		position: relative;
		height: 31px;
		border: 1px solid #aaa;
		border-bottom-color: #888;
		border-radius: 3px;
		background: #fafafa;
	}

	.select select {
		appearance: none;
		width: 100%;
		height: 100%;
		padding-left: 9px;
	}

	.select .caret {
		position: absolute;
		top: 12px;
		right: 10px;
		pointer-events: none;
	}

	.deck {
		display: flex;
		flex-direction: column;
		align-items: center;
		gap: 12px;
		width: 58px;
	}

	.deck-menu {
		height: 36px;
		margin-bottom: -4px;
	}

	.deck-button {
		width: 34px;
		height: 34px;
	}

	/* status bar */
	.table-tools {
		box-sizing: border-box;
		height: 39px;
		padding-bottom: 2px;
	}

	.status {
		display: grid;
		grid-template-columns: 30px 224fr 307fr 271fr 279fr 142fr 147fr 263px;
		align-items: center;
		height: 17px;
		padding: 3px 8px 0 7px;
		border-top: 1px solid #999;
		font-size: 12px;
	}

	.view {
		display: flex;
		align-items: center;
		gap: 3px;
	}

	.view button {
		width: 14px;
		color: #777;
		font-size: 16px;
		line-height: 16px;
	}

	.view svg {
		margin-right: 9px;
	}

	.view span {
		margin-left: 9px;
	}

	.view input {
		appearance: none;
		width: 97px;
		height: 14px;
		background: linear-gradient(#222, #222) center / 100% 1px no-repeat, linear-gradient(#222, #222) 30% center / 1px 7px no-repeat;
	}

	.view input::-webkit-slider-thumb {
		appearance: none;
		width: 9px;
		height: 9px;
		border: 1px solid #777;
		border-radius: 50%;
		background: #fff;
	}

	/* dialog */
	.dialog {
		position: absolute;
		top: 348px;
		left: 209px;
		box-sizing: border-box;
		width: 968px;
		border: 1px solid #888;
		border-radius: 6px 6px 0 0;
		background: #d6d6d6;
		box-shadow: 0 4px 14px rgba(0, 0, 0, 0.55);
	}

	.dialog header {
		display: flex;
		align-items: center;
		height: 21px;
		padding: 0 14px 0 22px;
		border-radius: 6px 6px 0 0;
		background: #e8e8e8;
		box-sizing: border-box;
		color: #808080;
	}

	.dialog header h2 {
		position: relative;
		margin: 0 auto;
		font-weight: 600;
	}

	h2 .frame {
		inset: -4px -10px;
	}

	.dialog-body {
		padding: 12px;
	}

	.tabs {
		display: grid;
		gap: 2px;
	}

	.tabs-top {
		grid-template-columns: 95fr 134fr 120fr 95fr 85fr 121fr 119fr 158fr;
		margin-right: 1px;
	}

	.tabs-bottom {
		grid-template-columns: 149fr 215fr 153fr 134fr 118fr 161fr;
		margin-bottom: -1px;
	}

	.tabs button {
		height: 26px;
		border: 1px solid #999;
		border-radius: 4px 4px 0 0;
		background: #e3e3e3;
		white-space: nowrap;
	}

	.tabs button[aria-selected='true'] {
		position: relative;
		border-bottom-color: #ececec;
		background: #ececec;
	}

	.tab-page {
		display: flex;
		justify-content: space-between;
		align-items: flex-start;
		box-sizing: border-box;
		min-height: 456px;
		padding: 0 6px;
		border: 1px solid #999;
		background: #ececec;
	}

	.tab-page section {
		position: relative;
	}

	.tab-page section + section {
		margin-top: 4px;
	}

	h3 {
		height: 28px;
		font-size: 12px;
		line-height: 28px;
	}

	.field {
		display: flex;
		align-items: center;
		padding-left: 12px;
	}

	.field + .field {
		margin-top: 3px;
	}

	.field label {
		width: 153px;
	}

	.field .of {
		width: auto;
		margin: 0 6px;
	}

	.check {
		height: 27px;
		padding-left: 12px;
	}

	.spin {
		display: flex;
		width: 134px;
		height: 30px;
		border: 1px solid #bbb;
		border-radius: 3px;
		background: #fafafa;
	}

	.spin input {
		flex: 1;
		min-width: 0;
		margin: -1px 0 -1px -1px;
		padding: 0 0 2px 4px;
		border: 1px solid #999;
		border-radius: 3px 0 0 3px;
		background: #e8e8e8;
	}

	.spin button {
		width: 26px;
	}

	.spin button + button {
		border-left: 1px solid #bbb;
	}

	.spin button:disabled {
		background: #d0d0d0;
		color: #8a8a8a;
	}

	.mode {
		width: 374px;
		height: 30px;
	}

	.line-spacing > .frame {
		top: 2px;
		left: -6px;
		width: 574px;
		height: 63px;
	}

	.sample {
		display: flex;
		flex-direction: column;
		justify-content: space-between;
		box-sizing: border-box;
		width: 141px;
		height: 198px;
		margin-top: 6px;
		padding: 9px 3px 10px;
		border: 2px solid #222;
		outline: 1px solid #aaa;
		outline-offset: -1px;
		background: #fafafa;
	}

	.bar {
		height: 11px;
		background: #bcbcbc;
	}

	.bar.dark {
		background: #7d7d7d;
	}

	.actions {
		display: flex;
		gap: 6px;
		padding: 18px 5px 5px 6px;
	}

	.actions button {
		flex: 122;
		height: 32px;
		border: 1px solid #aaa;
		border-bottom-color: #888;
		border-radius: 3px;
		background: #fafafa;
		white-space: nowrap;
	}

	.actions .long {
		flex: 290;
	}

	.actions .default {
		border: 2px solid #99bb77;
	}
</style>
